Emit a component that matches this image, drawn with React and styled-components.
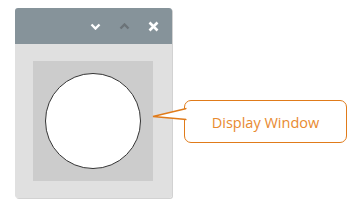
import React from 'react'
import styled, { createGlobalStyle } from 'styled-components'

const Global = createGlobalStyle`
  html, body {
    margin: 0;
    padding: 0;
    background: #ffffff;
    font-family: "Liberation Sans", Arial, sans-serif;
  }
`

const Page = styled.div`
  display: flex;
  align-items: flex-start;
  padding: 8px 0 0 15px;
  width: 358px;
  height: 210px;
  box-sizing: border-box;
`

const Window = styled.div`
  width: 157px;
  display: flex;
  flex-direction: column;
  border-radius: 3px;
  overflow: hidden;
  box-shadow: 1px 1px 0 #d2d2d2;
`

const TitleBar = styled.div`
  height: 36px;
  background: #86939a;
  display: flex;
  align-items: center;
  justify-content: flex-end;
  gap: 17px;
  padding-right: 13px;
`

const IconButton = styled.span`
  width: 12px;
  height: 12px;
  display: flex;
  align-items: center;
  justify-content: center;
  color: ${p => (p.$muted ? '#6b7378' : '#ffffff')};
`

const Body = styled.div`
  background: #e0e0e0;
  padding: 17px 19px 17px 18px;
  display: flex;
`

const Screen = styled.div`
  width: 120px;
  height: 120px;
  background: #cccccc;
  display: flex;
  align-items: center;
  justify-content: center;
`

const Circle = styled.div`
  width: 94px;
  height: 94px;
  border-radius: 50%;
  background: #ffffff;
  border: 1.5px solid #333333;
`

const Callout = styled.div`
  position: relative;
  margin: 92px 0 0 12px;
  width: 163px;
  height: 43px;
  box-sizing: border-box;
  border: 1.5px solid #e07b1a;
  border-radius: 7px;
  display: flex;
  align-items: center;
  justify-content: center;
  padding-top: 1px;
  color: #e88a30;
  font-family: "Open Sans", "Liberation Sans", sans-serif;
  font-size: 14.5px;
`

const Pointer = styled.svg`
  position: absolute;
  left: -33px;
  top: 6px;
`

const Chevron = ({ up }) => (
  <svg width="11" height="7" viewBox="0 0 11 7">
    <path
      d={up ? 'M1.5 5.5 L5.5 1.5 L9.5 5.5' : 'M1.5 1.5 L5.5 5.5 L9.5 1.5'}
      fill="none"
      stroke="currentColor"
      strokeWidth="2.4"
    />
  </svg>
)

const Close = () => (
  <svg width="11" height="11" viewBox="0 0 11 11">
    <path d="M1.5 1.5 L9.5 9.5 M9.5 1.5 L1.5 9.5" stroke="currentColor" strokeWidth="2.6" />
  </svg>
)

const App = () => {
  return (
    <>
      <Global />
      <Page>
        <Window>
          <TitleBar>
            <IconButton><Chevron /></IconButton>
            <IconButton $muted><Chevron up /></IconButton>
            <IconButton><Close /></IconButton>
          </TitleBar>
          <Body>
            <Screen>
              <Circle />
            </Screen>
          </Body>
        </Window>
        <Callout>
          Display Window
          <Pointer width="36" height="16" viewBox="0 0 36 16">
            <path d="M34.5 1.5 L1 9.5 L34.5 12.5" fill="#ffffff" stroke="#e07b1a" strokeWidth="1.5" strokeLinejoin="miter" />
            <rect x="34" y="2.3" width="3" height="9.5" fill="#ffffff" />
          </Pointer>
        </Callout>
      </Page>
    </>
  )
}

export default App
